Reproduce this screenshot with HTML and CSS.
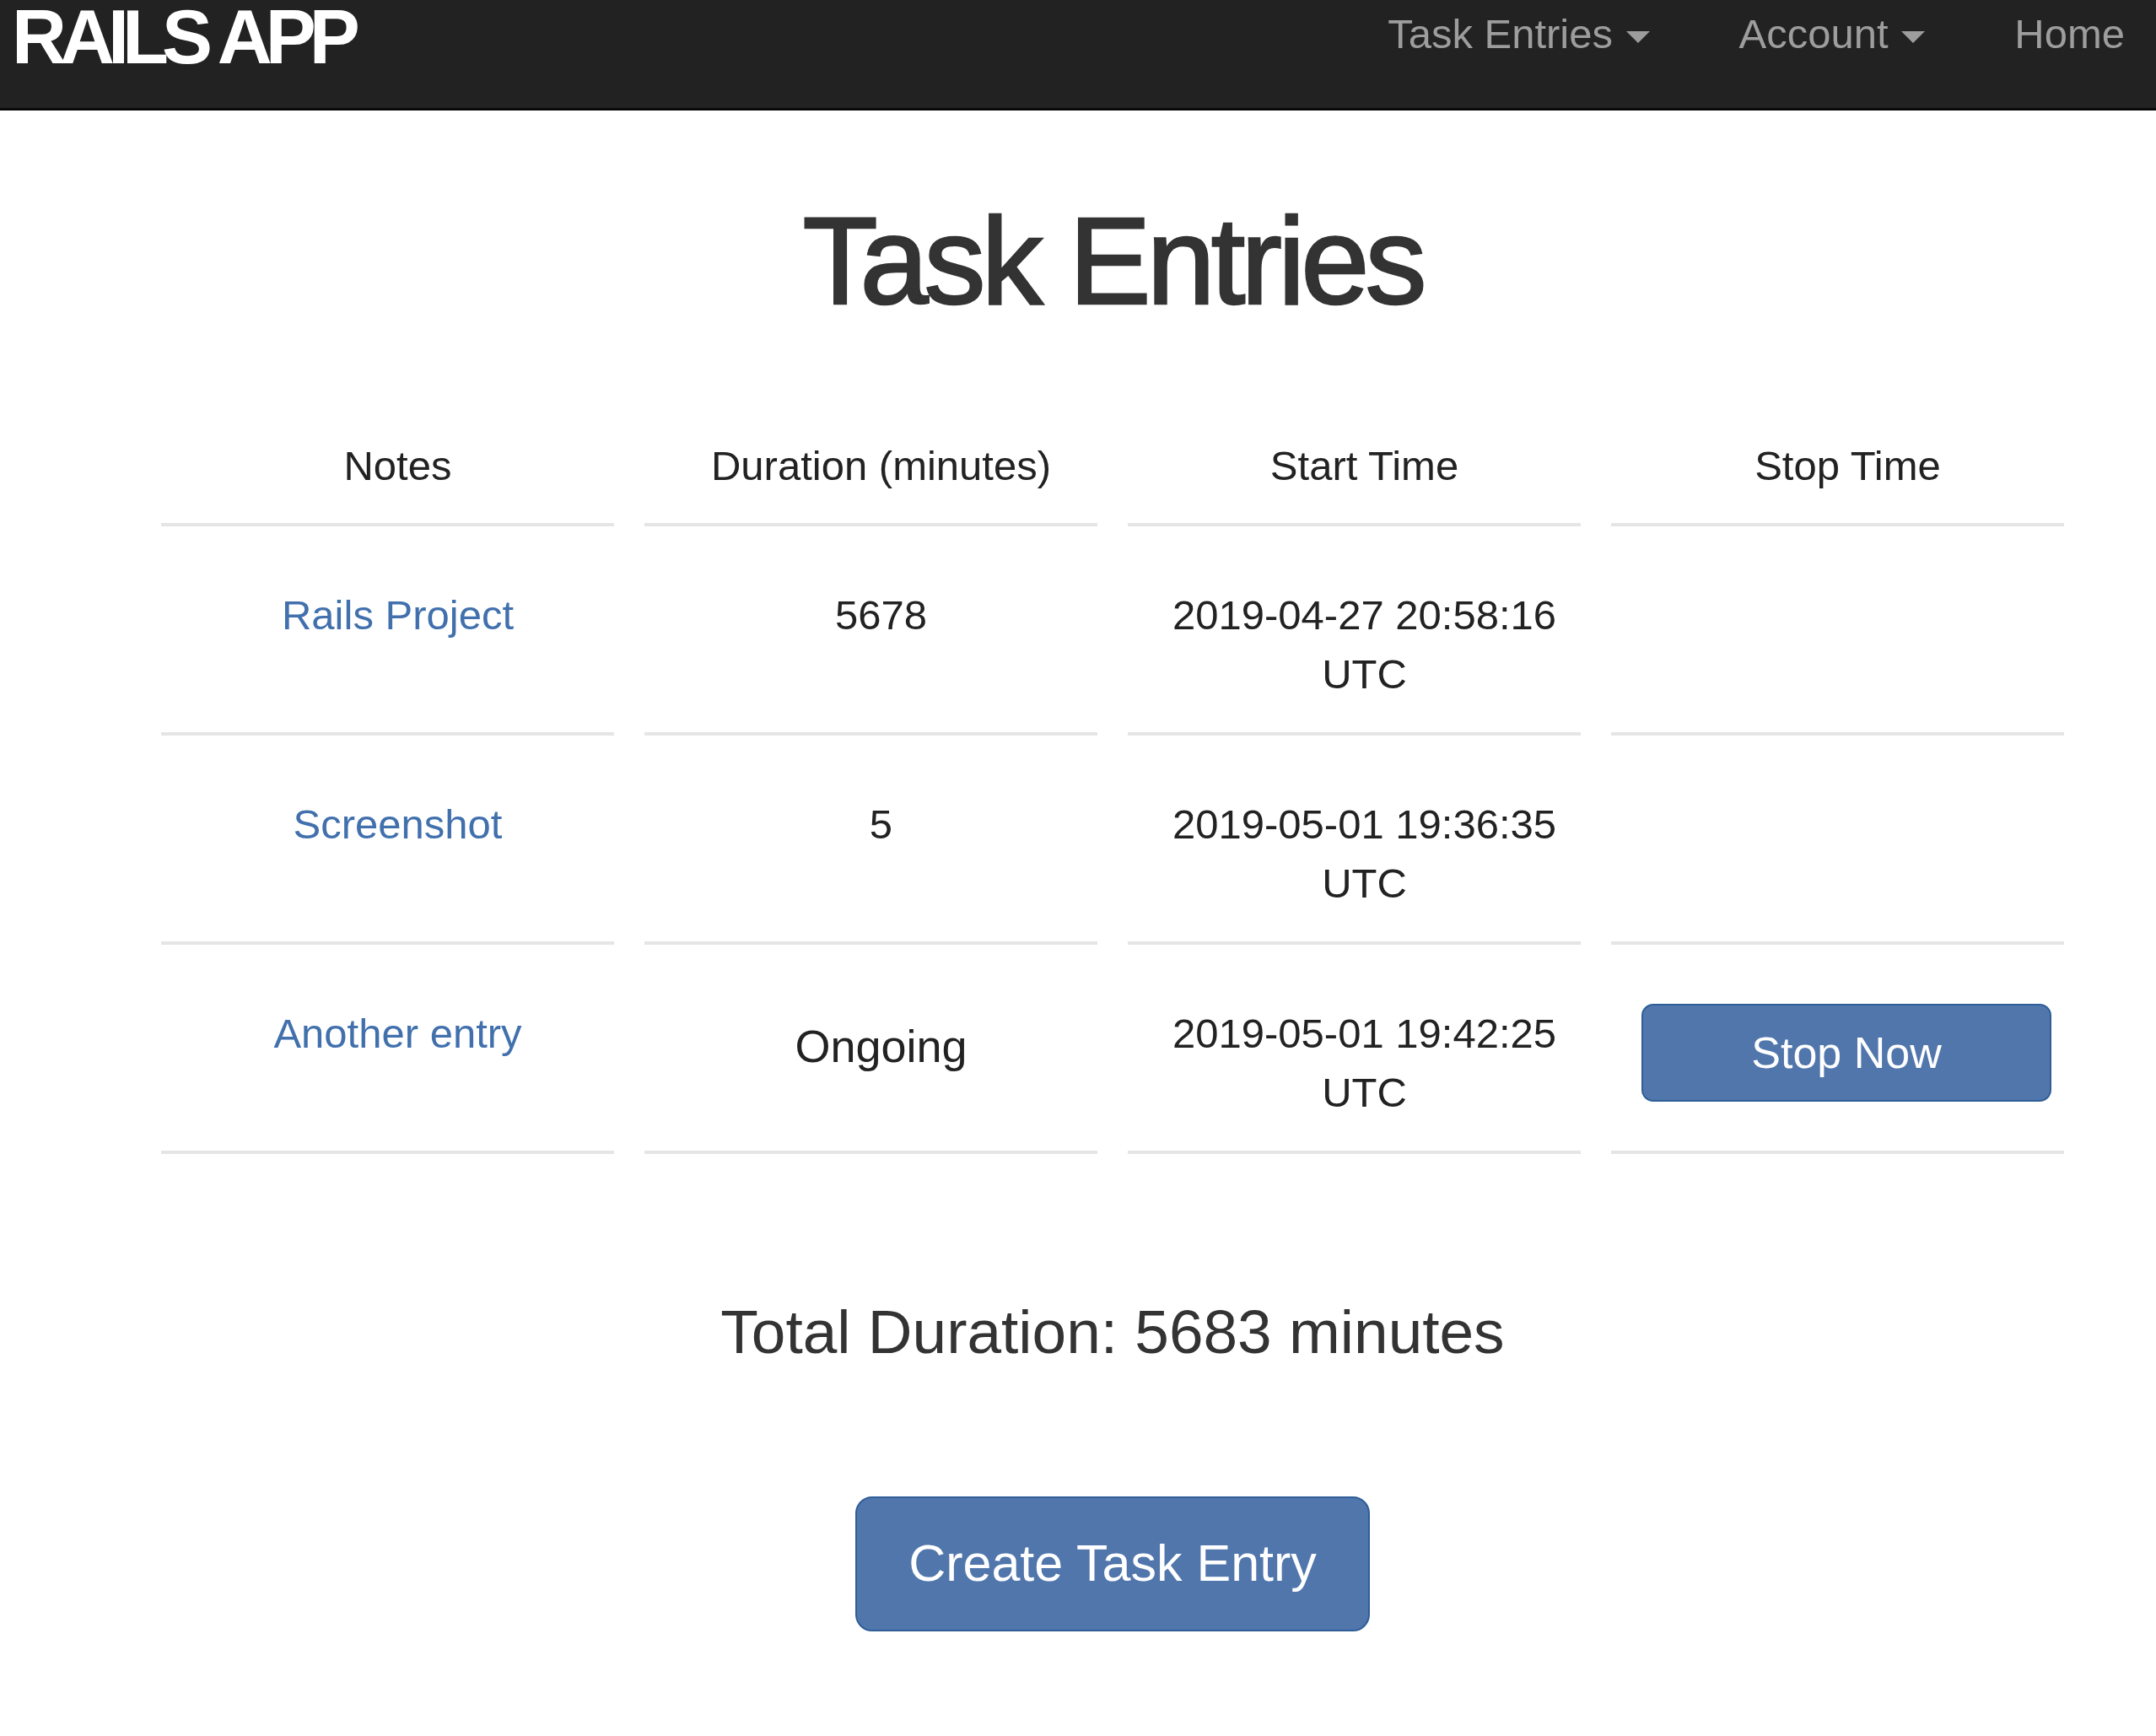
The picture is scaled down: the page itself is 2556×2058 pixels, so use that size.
FILE: index.html
```html
<!DOCTYPE html>
<html lang="en">
<head>
<meta charset="utf-8">
<title>Task Entries</title>
<link rel="stylesheet" href="styles.css">
</head>
<body>
<header class="navbar">
  <a class="brand" href="#">RAILS APP</a>
  <ul class="nav">
    <li><a href="#">Task Entries <span class="caret"></span></a></li>
    <li><a href="#">Account <span class="caret"></span></a></li>
    <li><a href="#">Home</a></li>
  </ul>
</header>
<main class="page">
  <h1 class="title">Task Entries</h1>
  <table class="entries">
    <thead>
      <tr>
        <th>Notes</th>
        <th>Duration (minutes)</th>
        <th>Start Time</th>
        <th>Stop Time</th>
      </tr>
    </thead>
    <tbody>
      <tr>
        <td><a href="#">Rails Project</a></td>
        <td>5678</td>
        <td>2019-04-27 20:58:16<br>UTC</td>
        <td></td>
      </tr>
      <tr>
        <td><a href="#">Screenshot</a></td>
        <td>5</td>
        <td>2019-05-01 19:36:35<br>UTC</td>
        <td></td>
      </tr>
      <tr>
        <td><a href="#">Another entry</a></td>
        <td><span class="ongoing">Ongoing</span></td>
        <td>2019-05-01 19:42:25<br>UTC</td>
        <td class="action"><button class="btn btn-stop">Stop Now</button></td>
      </tr>
    </tbody>
  </table>
  <h3 class="total">Total Duration: 5683 minutes</h3>
  <div class="create-wrap">
    <a class="btn btn-create" href="#">Create Task Entry</a>
  </div>
</main>
</body>
</html>
```
FILE: styles.css
```css
* { box-sizing: border-box; }
html, body { margin: 0; padding: 0; background: #fff; }
body {
  font-family: "Liberation Sans", Arial, Helvetica, sans-serif;
  color: #333;
}
a { text-decoration: none; }

.navbar {
  height: 131px;
  background: #222;
  border-bottom: 3px solid #080808;
  display: flex;
  justify-content: space-between;
  align-items: flex-start;
  padding: 0 37px 0 14px;
}
.brand {
  color: #fff;
  font-weight: 700;
  font-size: 90px;
  line-height: 88px;
  letter-spacing: -8px;
  white-space: nowrap;
}
.nav {
  list-style: none;
  margin: 16px 0 0;
  padding: 0;
  display: flex;
  gap: 106px;
}
.nav a {
  color: #9d9d9d;
  font-size: 49px;
  line-height: 49px;
  white-space: nowrap;
}
.caret {
  display: inline-block;
  width: 0;
  height: 0;
  margin-left: 2px;
  vertical-align: middle;
  border-top: 14px solid #9d9d9d;
  border-left: 14px solid transparent;
  border-right: 14px solid transparent;
}

.page {
  padding: 0 0 200px 82px;
}
.title {
  margin: 98px 0 0;
  text-align: center;
  font-size: 146px;
  line-height: 161px;
  font-weight: 400;
  letter-spacing: -5px;
  color: #333;
  -webkit-text-stroke: 2.5px #333;
}

.entries {
  margin: 58px auto 0;
  width: 2328px;
  table-layout: fixed;
  border-collapse: separate;
  border-spacing: 36px;
  font-size: 49px;
  line-height: 70px;
  color: #222;
}
.entries th,
.entries td {
  padding: 34px 24px 34px 48px;
  text-align: center;
  vertical-align: top;
  border-bottom: 4px solid #e5e5e5;
  font-weight: 400;
}
.entries th {
  line-height: 68px;
}
.entries td a { color: #4170ad; }
.ongoing {
  display: block;
  font-size: 54px;
  line-height: 100px;
}
.entries td.action {
  text-align: left;
  padding-left: 36px;
  padding-right: 36px;
}

.btn {
  display: inline-block;
  background: #5176ac;
  color: #fff;
  border: 2px solid #2f5e98;
  font-family: inherit;
  text-align: center;
  white-space: nowrap;
}
.btn-stop {
  width: 486px;
  font-size: 52px;
  line-height: 74px;
  padding: 19px 0;
  border-radius: 14px;
}

.total {
  margin: 135px 0 0;
  text-align: center;
  font-size: 73px;
  line-height: 80px;
  font-weight: 400;
  color: #333;
}
.create-wrap {
  margin-top: 155px;
  text-align: center;
}
.btn-create {
  font-size: 61px;
  line-height: 81px;
  padding: 37px 61px 38px;
  border-radius: 20px;
}
```
